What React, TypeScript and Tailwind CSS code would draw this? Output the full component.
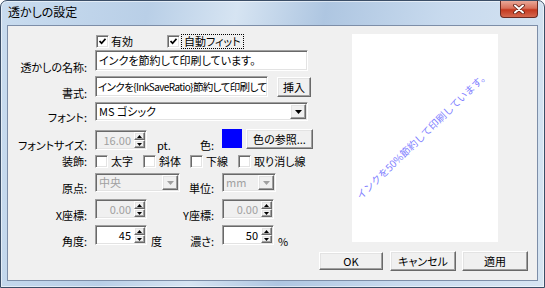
import React from 'react';

const sunken =
  'border border-t-[#a0a0a0] border-l-[#a0a0a0] border-b-white border-r-white shadow-[inset_1px_1px_0_#696969,inset_-1px_-1px_0_#e3e3e3]';
const raised =
  'bg-[#f0f0f0] border border-t-white border-l-white border-b-[#696969] border-r-[#696969] shadow-[inset_-1px_-1px_0_#a0a0a0,inset_1px_1px_0_#e3e3e3]';

const Check: React.FC<{ checked?: boolean }> = ({ checked }) => (
  <span className={`w-[13px] h-[13px] shrink-0 bg-white flex items-center justify-center ${sunken}`}>
    {checked && (
      <svg width="7" height="7" viewBox="0 0 7 7">
        <polyline points="0.5,3 2.6,5.2 6.5,0.8" fill="none" stroke="#000" strokeWidth="1.7" />
      </svg>
    )}
  </span>
);

const Label: React.FC<{ children: React.ReactNode; w?: string }> = ({ children, w = 'w-[79px]' }) => (
  <span className={`${w} shrink-0 text-right self-end mb-[-3px] leading-[13px] whitespace-nowrap`}>{children}</span>
);

const Arrow: React.FC<{ up?: boolean; color?: string }> = ({ up, color = '#000' }) => (
  <svg width="5" height="3" viewBox="0 0 5 3">
    <polygon points={up ? '2.5,0 5,3 0,3' : '0,0 5,0 2.5,3'} fill={color} />
  </svg>
);

const Spin: React.FC<{ value: string; disabled?: boolean }> = ({ value, disabled }) => (
  <div className={`w-[52px] h-[20px] flex ${sunken} ${disabled ? 'bg-[#f0f0f0] text-[#a0a0a0]' : 'bg-white text-black'}`}>
    <span className="flex-1 text-right pr-[3px] pt-[2px] leading-[14px]">{value}</span>
    <div className="w-[12px] flex flex-col py-[1px] pr-[1px]">
      <span className={`flex-1 flex items-center justify-center ${raised}`}>
        <Arrow up />
      </span>
      <span className={`flex-1 flex items-center justify-center ${raised}`}>
        <Arrow />
      </span>
    </div>
  </div>
);

const Combo: React.FC<{ value: string; w: string; disabled?: boolean }> = ({ value, w, disabled }) => (
  <div className={`${w} h-[19px] flex ${sunken} ${disabled ? 'bg-[#f0f0f0] text-[#a0a0a0]' : 'bg-white text-black'}`}>
    <span className="flex-1 pl-[3px] leading-[17px] whitespace-nowrap overflow-hidden">{value}</span>
    <span className={`w-[16px] m-[1px] flex items-center justify-center ${raised}`}>
      <svg width="7" height="4" viewBox="0 0 7 4">
        <polygon points="0,0 7,0 3.5,4" fill={disabled ? '#a0a0a0' : '#000'} />
      </svg>
    </span>
  </div>
);

const Btn: React.FC<{ children: React.ReactNode; w: string }> = ({ children, w }) => (
  <button className={`${w} h-[20px] ${raised} flex items-center justify-center leading-[14px]`}>{children}</button>
);

export default function App() {
  return (
    <div className="w-[545px] h-[288px] font-['Noto_Sans_CJK_JP','Noto_Sans',sans-serif] [font-feature-settings:'palt'] text-[11px] text-black">
      <div className="w-full h-full flex flex-col rounded-t-[7px] border border-[#3b4e67] bg-[linear-gradient(100deg,#c9dcef_0%,#b9cfe7_25%,#d6e4f2_40%,#aec6e1_55%,#c8daee_75%,#d7e5f2_100%)] shadow-[inset_0_0_0_1px_rgba(255,255,255,0.55)]">
        <div className="h-[24px] flex justify-between shrink-0">
          <span className="pl-[7px] pt-[3px] text-[12px] leading-[16px]">透かしの設定</span>
          <button className="w-[38px] h-[17px] mr-[6px] rounded-b-[4px] border border-t-0 border-[#6b2a21] bg-[linear-gradient(#e9a898_0%,#d9705a_45%,#c4391f_55%,#d4684f_100%)] flex items-center justify-center">
            <svg width="12" height="10" viewBox="0 0 12 10">
              <path d="M2 1.5L10 8.5M10 1.5L2 8.5" stroke="#5a1a10" strokeWidth="3.6" strokeLinecap="round" />
              <path d="M2 1.5L10 8.5M10 1.5L2 8.5" stroke="#fff" strokeWidth="2" strokeLinecap="round" />
            </svg>
          </button>
        </div>

        <div className="flex-1 mx-[6px] mb-[6px] border border-[#7d8ea8] bg-[#f0f0f0] flex flex-col">
          <div className="flex h-[210px] mt-[8px]">
            <div className="w-[336px] flex flex-col pt-[1px]">
              <div className="flex h-[13px] items-center">
                <span className="w-[88px] shrink-0" />
                <span className="w-[71px] flex items-center gap-[2px]">
                  <Check checked />
                  <span className="leading-[13px]">有効</span>
                </span>
                <span className="flex items-center gap-[1px]">
                  <Check checked />
                  <span className="px-[2px] border border-dotted border-black leading-[13px]">自動フィット</span>
                </span>
              </div>

              <div className="flex h-[21px] mt-[2px]">
                <Label>透かしの名称:</Label>
                <div className={`ml-[8px] w-[213px] bg-white ${sunken} px-[3px] leading-[19px] whitespace-nowrap overflow-hidden`}>
                  インクを節約して印刷しています。
                </div>
              </div>

              <div className="flex h-[21px] mt-[5px]">
                <Label>書式:</Label>
                <div className={`ml-[8px] w-[173px] bg-white ${sunken} pl-[2px] text-[10.5px] leading-[19px] whitespace-nowrap overflow-hidden tracking-[-0.6px]`}>
                  インクを<span className="text-[10px]">{'{InkSaveRatio}'}</span>節約して印刷して
                </div>
                <div className="ml-[9px] mt-[1px]">
                  <Btn w="w-[34px]">挿入</Btn>
                </div>
              </div>

              <div className="flex h-[19px] mt-[5px]">
                <Label>フォント:</Label>
                <div className="ml-[8px]">
                  <Combo value="MS ゴシック" w="w-[213px]" />
                </div>
              </div>

              <div className="flex h-[20px] mt-[8px]">
                <Label>フォントサイズ:</Label>
                <div className="ml-[8px] w-[87px] flex">
                  <div className="mt-[1px]">
                    <Spin value="16.00" disabled />
                  </div>
                  <span className="ml-[10px] self-end mb-[-3px] leading-[13px]">pt.</span>
                </div>
                <Label w="w-[32px]">色:</Label>
                <div className="ml-[8px] flex gap-[4px]">
                  <span className="w-[20px] h-[19px] bg-[#0000ff]" />
                  <Btn w="w-[67px]">色の参照...</Btn>
                </div>
              </div>

              <div className="flex h-[13px] mt-[6px] items-center">
                <span className="w-[79px] shrink-0 text-right leading-[13px]">装飾:</span>
                <div className="ml-[8px] flex">
                  <span className="w-[48px] flex items-center gap-[3px]">
                    <Check />
                    <span className="leading-[13px]">太字</span>
                  </span>
                  <span className="w-[47px] flex items-center gap-[3px]">
                    <Check />
                    <span className="leading-[13px]">斜体</span>
                  </span>
                  <span className="w-[48px] flex items-center gap-[3px]">
                    <Check />
                    <span className="leading-[13px]">下線</span>
                  </span>
                  <span className="flex items-center gap-[3px]">
                    <Check />
                    <span className="leading-[13px]">取り消し線</span>
                  </span>
                </div>
              </div>

              <div className="flex h-[19px] mt-[5px]">
                <Label>原点:</Label>
                <div className="ml-[8px] w-[87px]">
                  <Combo value="中央" w="w-[85px]" disabled />
                </div>
                <Label w="w-[32px]">単位:</Label>
                <div className="ml-[8px]">
                  <Combo value="mm" w="w-[54px]" disabled />
                </div>
              </div>

              <div className="flex h-[20px] mt-[7px]">
                <Label>X座標:</Label>
                <div className="ml-[8px] w-[87px]">
                  <Spin value="0.00" disabled />
                </div>
                <Label w="w-[32px]">Y座標:</Label>
                <div className="ml-[8px]">
                  <Spin value="0.00" disabled />
                </div>
              </div>

              <div className="flex h-[20px] mt-[6px]">
                <Label>角度:</Label>
                <div className="ml-[8px] w-[87px] flex">
                  <Spin value="45" />
                  <span className="ml-[4px] self-end mb-[-3px] leading-[13px]">度</span>
                </div>
                <Label w="w-[32px]">濃さ:</Label>
                <div className="ml-[8px] flex">
                  <Spin value="50" />
                  <span className="ml-[4px] self-end mb-[-3px] leading-[13px]">%</span>
                </div>
              </div>
            </div>

            <div className="ml-[8px] w-[146px] h-[208px] bg-white flex items-center justify-center overflow-hidden">
              <span className="-rotate-[44deg] whitespace-nowrap text-[10px] leading-[12px] text-[#8080ff] [font-feature-settings:normal] translate-x-[-3px] translate-y-[-3px]">
                インクを50%節約して印刷しています。
              </span>
            </div>
          </div>

          <div className="flex justify-end gap-[6px] pr-[9px] mt-[7px]">
            <button className={`w-[64px] h-[18px] mt-[1px] mr-[1px] ${raised} shadow-[0_0_0_1px_#000,inset_-1px_-1px_0_#a0a0a0,inset_1px_1px_0_#e3e3e3] flex items-center justify-center leading-[14px]`}>
              OK
            </button>
            <Btn w="w-[66px]">キャンセル</Btn>
            <Btn w="w-[66px]">適用</Btn>
          </div>
        </div>
      </div>
    </div>
  );
}
